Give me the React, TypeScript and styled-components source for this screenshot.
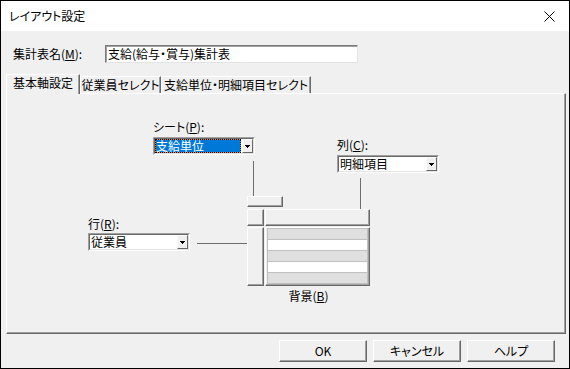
import styled, { createGlobalStyle } from 'styled-components';

const GlobalStyle = createGlobalStyle`
  * { box-sizing: border-box; }
  html, body { margin: 0; padding: 0; background: #f0f0f0; }
  body {
    font-family: "Noto Sans CJK JP", "Noto Sans", sans-serif;
    font-size: 12px;
    color: #000;
    font-feature-settings: "palt";
  }
`;

const Window = styled.div`
  width: 570px;
  height: 369px;
  border: 1px solid #000;
  background: #f0f0f0;
  display: flex;
  flex-direction: column;
`;

const TitleBar = styled.div`
  height: 30px;
  background: #fff;
  display: flex;
  align-items: center;
  justify-content: space-between;
  padding: 0 14px 0 8px;
  line-height: 14px;
`;

const NameRow = styled.div`
  display: flex;
  align-items: center;
  margin-top: 14px;
  padding-left: 12px;
  line-height: 14px;
`;

const NameLabel = styled.div`
  width: 92px;
`;

const TextBox = styled.div`
  width: 253px;
  height: 18px;
  background: #fff;
  border: 1px solid;
  border-color: #7a7a7a #e3e3e3 #e3e3e3 #7a7a7a;
  box-shadow: inset 1px 1px 0 #a0a0a0;
  padding: 1px 0 0 2px;
  line-height: 14px;
`;

const TabStrip = styled.div`
  display: flex;
  align-items: flex-end;
  height: 19px;
  margin: 11px 0 0 5px;
`;

const Tab = styled.div<{ $active?: boolean; $w: number }>`
  position: relative;
  z-index: ${(p) => (p.$active ? 1 : 0)};
  width: ${(p) => p.$w}px;
  height: ${(p) => (p.$active ? 20 : 17)}px;
  margin-bottom: ${(p) => (p.$active ? -1 : 0)}px;
  padding-bottom: ${(p) => (p.$active ? 3 : 1)}px;
  background: #f0f0f0;
  border-top: 1px solid #fff;
  border-left: 1px solid #fff;
  border-right: 1px solid #696969;
  box-shadow: inset -1px 0 0 #a0a0a0;
  display: flex;
  align-items: center;
  justify-content: center;
  line-height: 14px;
  white-space: nowrap;
`;

const Panel = styled.div`
  position: relative;
  height: 241px;
  margin: 0 3px 0 5px;
  border-top: 1px solid #fff;
  border-left: 1px solid #fff;
  border-right: 1px solid #696969;
  border-bottom: 1px solid #696969;
  box-shadow: inset -1px -1px 0 #a0a0a0;
`;

const Node = styled.div<{ $x: number; $y: number }>`
  position: absolute;
  left: ${(p) => p.$x}px;
  top: ${(p) => p.$y}px;
  line-height: 14px;
  white-space: nowrap;
`;

const Line = styled.div<{ $x: number; $y: number; $w: number; $h: number }>`
  position: absolute;
  left: ${(p) => p.$x}px;
  top: ${(p) => p.$y}px;
  width: ${(p) => p.$w}px;
  height: ${(p) => p.$h}px;
  background: #6e6e6e;
`;

const Combo = styled.div`
  width: 102px;
  height: 18px;
  border: 1px solid;
  border-color: #a0a0a0 #fff #fff #a0a0a0;
`;

const ComboInner = styled.div`
  height: 100%;
  display: flex;
  background: #fff;
  border: 1px solid;
  border-color: #696969 #e3e3e3 #e3e3e3 #696969;
`;

const ComboText = styled.div`
  flex: 1;
  padding-left: 1px;
  line-height: 14px;
`;

const Focus = styled.div`
  flex: 1;
  background: #f08a24;
`;

const Selected = styled.div`
  height: 100%;
  border: 1px dotted #000;
  background: #0078d7;
  background-clip: padding-box;
  color: #fff;
  line-height: 12px;
`;

const DropButton = styled.div`
  width: 11px;
  height: 14px;
  margin-left: 1px;
  background: #f0f0f0;
  border-top: 1px solid #fff;
  border-left: 1px solid #fff;
  border-right: 1px solid #696969;
  border-bottom: 1px solid #696969;
  display: flex;
  align-items: center;
  justify-content: center;
`;

const Raised = styled.div`
  background: #f0f0f0;
  border-top: 1px solid #fff;
  border-left: 1px solid #fff;
  border-right: 1px solid #696969;
  border-bottom: 1px solid #696969;
  box-shadow: inset -1px -1px 0 #a0a0a0;
`;

const SmallBox = styled(Raised)`
  width: 36px;
  height: 11px;
`;

const Grid = styled.div`
  display: grid;
  grid-template-columns: 17px 105px;
  grid-template-rows: 17px 59px;
  gap: 1px;
`;

const DataArea = styled(Raised)`
  padding: 0 1px 1px 1px;
`;

const RowList = styled.div`
  border: 1px solid #c0c0c0;
`;

const DataRow = styled.div<{ $white: boolean }>`
  height: 11px;
  background: ${(p) => (p.$white ? '#fff' : '#dfdfdf')};
  border-top: 1px solid #c0c0c0;
  &:first-child {
    height: 10px;
    border-top: none;
  }
`;

const Caption = styled.div`
  margin-top: 3px;
  text-align: center;
  line-height: 14px;
`;

const ButtonRow = styled.div`
  display: flex;
  justify-content: flex-end;
  gap: 6px;
  margin-top: 6px;
  padding-right: 14px;
`;

const Button = styled(Raised)`
  width: 88px;
  height: 22px;
  display: flex;
  align-items: center;
  justify-content: center;
  line-height: 14px;
`;

const Arrow = () => (
  <svg width="5" height="3" viewBox="0 0 5 3" shapeRendering="crispEdges">
    <path d="M0 0h5L2.5 3z" fill="#000" />
  </svg>
);

const DropDown = ({ text, active }: { text: string; active?: boolean }) => (
  <Combo>
    <ComboInner>
      {active ? (
        <Focus>
          <Selected>{text}</Selected>
        </Focus>
      ) : (
        <ComboText>{text}</ComboText>
      )}
      <DropButton>
        <Arrow />
      </DropButton>
    </ComboInner>
  </Combo>
);

const rows = [false, true, false, true, false];

export default function App() {
  return (
    <>
      <GlobalStyle />
      <Window>
        <TitleBar>
          <span>レイアウト設定</span>
          <svg width="11" height="11" viewBox="0 0 11 11">
            <path d="M0.5 0.5L10.5 10.5M10.5 0.5L0.5 10.5" stroke="#000" strokeWidth="1" />
          </svg>
        </TitleBar>
        <NameRow>
          <NameLabel>
            集計表名(<u>M</u>):
          </NameLabel>
          <TextBox>支給(給与・賞与)集計表</TextBox>
        </NameRow>
        <TabStrip>
          <Tab $active $w={74}>基本軸設定</Tab>
          <Tab $w={81}>従業員セレクト</Tab>
          <Tab $w={150}>支給単位・明細項目セレクト</Tab>
        </TabStrip>
        <Panel>
          <Node $x={146} $y={26}>
            シート(<u>P</u>):
          </Node>
          <Node $x={146} $y={43}>
            <DropDown text="支給単位" active />
          </Node>
          <Line $x={246} $y={67} $w={1} $h={36} />
          <Node $x={240} $y={102}>
            <SmallBox />
          </Node>

          <Node $x={330} $y={44}>
            列(<u>C</u>):
          </Node>
          <Node $x={330} $y={61}>
            <DropDown text="明細項目" />
          </Node>
          <Line $x={353} $y={84} $w={1} $h={31} />

          <Node $x={81} $y={123}>
            行(<u>R</u>):
          </Node>
          <Node $x={81} $y={139}>
            <DropDown text="従業員" />
          </Node>
          <Line $x={190} $y={149} $w={50} $h={1} />

          <Node $x={240} $y={115}>
            <Grid>
              <Raised />
              <Raised />
              <Raised />
              <DataArea>
                <RowList>
                  {rows.map((w, i) => (
                    <DataRow key={i} $white={w} />
                  ))}
                </RowList>
              </DataArea>
            </Grid>
            <Caption>
              背景(<u>B</u>)
            </Caption>
          </Node>
        </Panel>
        <ButtonRow>
          <Button>OK</Button>
          <Button>キャンセル</Button>
          <Button>ヘルプ</Button>
        </ButtonRow>
      </Window>
    </>
  );
}
